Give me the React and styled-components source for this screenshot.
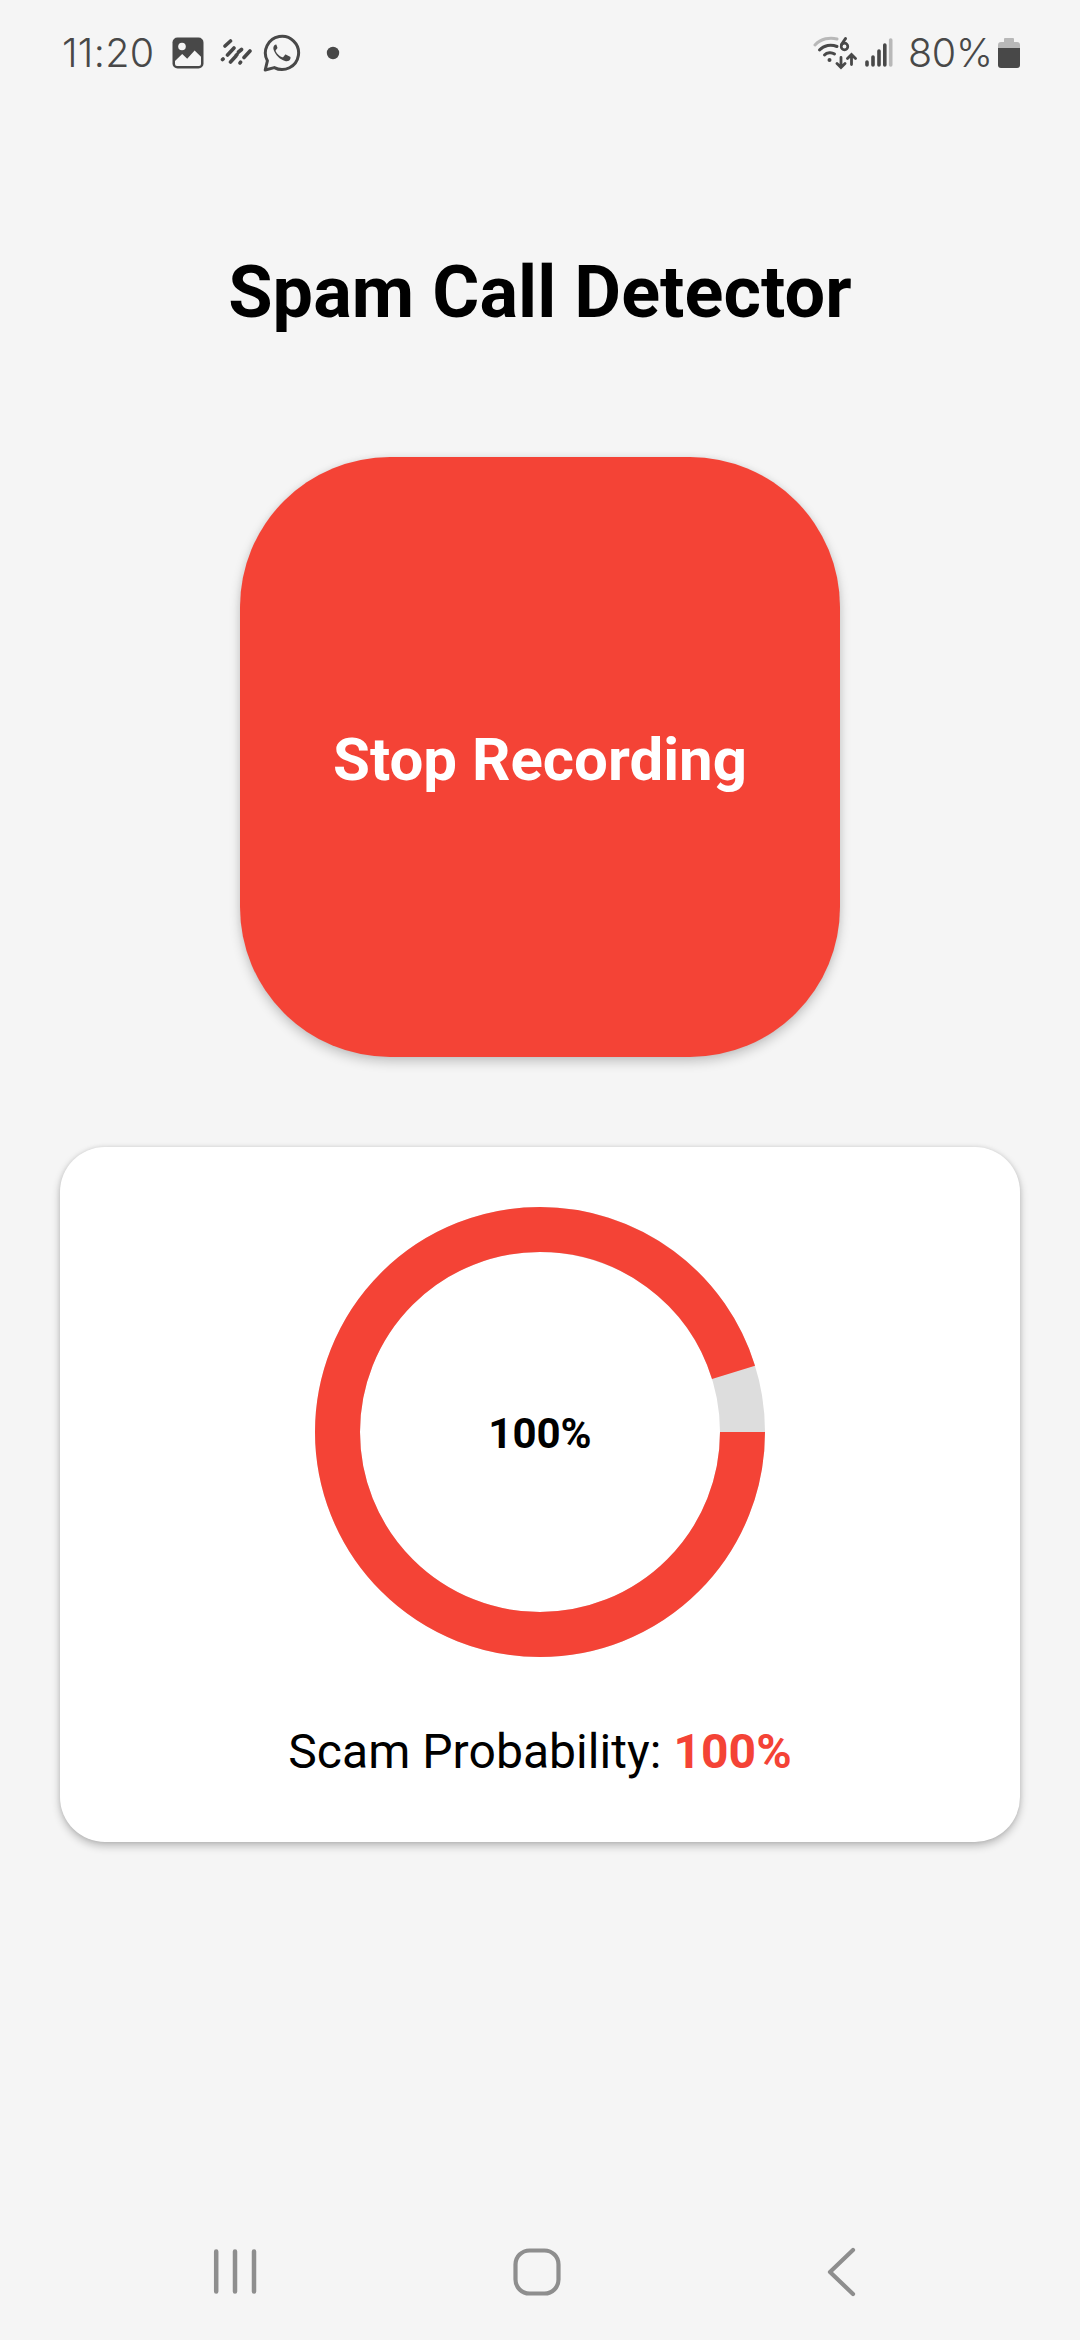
import React from 'react'
import styled, { createGlobalStyle } from 'styled-components'

const GlobalStyle = createGlobalStyle`
    body {
        margin: 0;
        background: #f5f5f5;
        font-family: Roboto, "Liberation Sans", sans-serif;
    }
`

const Screen = styled.div`
    display: flex;
    flex-direction: column;
    align-items: center;
    width: 1080px;
    height: 2340px;
    overflow: hidden;
    background: #f5f5f5;
    color: #000;
`

const StatusBar = styled.header`
    display: flex;
    align-items: center;
    justify-content: space-between;
    box-sizing: border-box;
    width: 100%;
    height: 106px;
    padding: 0 60px 0 62px;
    color: #484848;
`

const StatusGroup = styled.div`
    display: flex;
    align-items: center;
`

const StatusText = styled.span`
    width: ${({ $width }) => $width}px;
    margin-left: ${({ $gap }) => $gap || 0}px;
    font-family: Inter, Roboto, sans-serif;
    font-size: 39.5px;
    font-weight: 300;
    line-height: 46px;
    letter-spacing: ${({ $spacing }) => $spacing || 0}px;
    white-space: nowrap;
`

const StatusIcon = styled.svg`
    display: block;
    flex: none;
    margin-left: ${({ $gap }) => $gap || 0}px;
`

const Title = styled.h1`
    margin: 145px 0 0;
    font-size: 72px;
    font-weight: 700;
    line-height: 84px;
    letter-spacing: 0.08px;
    white-space: nowrap;
`

const RecordButton = styled.button`
    width: 600px;
    height: 600px;
    margin-top: 122px;
    padding: 4px 0 0;
    flex: none;
    border: none;
    border-radius: 150px;
    background: #f44336;
    box-shadow: 0 5px 12px rgba(0, 0, 0, 0.2), 0 0 6px rgba(0, 0, 0, 0.06);
    color: #fff;
    font-family: inherit;
    font-size: 60px;
    font-weight: 700;
`

const Card = styled.section`
    display: flex;
    flex-direction: column;
    align-items: center;
    box-sizing: border-box;
    flex: none;
    width: 960px;
    height: 695px;
    margin-top: 90px;
    padding-top: 60px;
    border-radius: 45px;
    background: #fff;
    box-shadow: 0 4px 8px rgba(0, 0, 0, 0.24), 0 0 4px rgba(0, 0, 0, 0.1);
`

const Gauge = styled.div`
    display: grid;
    place-items: center;
    width: 450px;
    height: 450px;

    > * {
        grid-area: 1 / 1;
    }
`

const GaugeLabel = styled.span`
    padding-top: 2px;
    font-size: 42px;
    font-weight: 700;
`

const Probability = styled.p`
    margin: 67px 0 0;
    font-size: 48px;
    line-height: 56px;
    letter-spacing: 0.05px;
    white-space: nowrap;
`

const ProbabilityValue = styled.strong`
    color: #f44336;
    font-weight: 700;
`

const NavBar = styled.nav`
    display: flex;
    align-items: center;
    justify-content: space-between;
    box-sizing: border-box;
    width: 100%;
    height: 136px;
    margin-top: auto;
    padding: 0 222px 0 210px;
`

const NavButton = styled.button`
    display: flex;
    margin-right: ${({ $gap }) => $gap || 0}px;
    padding: 0;
    border: none;
    background: none;
    color: #8e8e8e;
`

const RADIUS = 202.5
const LENGTH = 2 * Math.PI * RADIUS

const Ring = ({ filled }) => (
    <svg width="450" height="450" viewBox="0 0 450 450" fill="none" strokeWidth="45">
        <circle cx="225" cy="225" r={RADIUS} stroke="#ddd" />
        <circle cx="225" cy="225" r={RADIUS} stroke="#f44336" strokeDasharray={`${LENGTH * filled} ${LENGTH}`} />
    </svg>
)

const PictureIcon = () => (
    <StatusIcon $gap={18} width="32" height="32" viewBox="0 0 32 32">
        <rect x="0.5" y="0.5" width="31" height="31" rx="5" fill="currentColor" />
        <circle cx="10" cy="9.5" r="3.8" fill="#f5f5f5" />
        <path d="M3 24l7.2-7 5 4.8 7.4-8.3L29 19.7V27a2 2 0 0 1-2 2H5a2 2 0 0 1-2-2z" fill="#f5f5f5" />
    </StatusIcon>
)

const StripesIcon = () => (
    <StatusIcon $gap={15} width="34" height="28" viewBox="0 0 34 28" stroke="currentColor" strokeWidth="3.6" strokeLinecap="round">
        <path d="M6 7l5.500-5M3.500 20.500l.6-.6M8.500 16l6.500-7M11.500 23l5.500-6M19.500 13l3-2.500M17 16.500l1-1M21 24l.6-.8M25 18.500l6-6.500" />
    </StatusIcon>
)

const WhatsAppIcon = () => (
    <StatusIcon $gap={10} width="38" height="38" viewBox="0 0 38 38">
        <path d="M2.200 36L4.400 26.800A16.600 16.600 0 1 1 11.300 33.600z" fill="none" stroke="currentColor" strokeWidth="3" strokeLinejoin="round" />
        <path d="M13.300 10.500c-.7-.1-1.500.3-2.100 1.100-.9 1.100-1.100 2.700-.5 4.400 1.700 5 6.100 9.400 11.400 11 2.300.7 4.500-.2 5.200-2 .4-1.100.3-2-.2-2.300l-3.900-2c-.5-.2-.9-.1-1.300.4l-1.600 1.900c-.3.4-.7.4-1.200.2-2.900-1.300-5-3.300-6.400-6-.2-.4-.1-.8.200-1.100l1.300-1.600c.3-.4.300-.8.100-1.200z" fill="currentColor" />
    </StatusIcon>
)

const DotIcon = () => (
    <StatusIcon $gap={25} width="14" height="14" viewBox="0 0 14 14">
        <circle cx="7" cy="7" r="6.200" fill="currentColor" />
    </StatusIcon>
)

const WifiIcon = () => (
    <StatusIcon width="44" height="34" viewBox="0 0 44 34" fill="none" stroke="currentColor" strokeWidth="3" strokeLinecap="round">
        <path d="M2 9C8 2.500 17 1 24 3" opacity=".35" />
        <path d="M6.500 14C11 9 18 8 24 10.500M11.500 19C14 16.300 18.500 16 21.500 18" />
        <circle cx="16.500" cy="24" r="2" fill="currentColor" stroke="none" />
        <path d="M32.500 2.500L28.500 8.500" />
        <circle cx="31.500" cy="10.500" r="3.300" strokeWidth="2.700" />
        <path d="M28 21.500V31M24 27.500l4 4 4-4M38.500 28.500V19M34.500 22.500l4-4 4 4" strokeWidth="2.800" />
    </StatusIcon>
)

const SignalIcon = () => (
    <StatusIcon $gap={8} width="28" height="30" viewBox="0 0 28 30" stroke="currentColor" strokeWidth="3.600" strokeLinecap="round">
        <path d="M2 24V27M8 19V27M14 13V27M19.800 7V27" />
        <path d="M25.700 2V27" opacity=".35" />
    </StatusIcon>
)

const BatteryIcon = () => (
    <StatusIcon width="22" height="32" viewBox="0 0 22 32" fill="currentColor">
        <path d="M7 1h8q1 0 1 1v3h3q3 0 3 3v3H0V8q0-3 3-3h3V2q0-1 1-1z" opacity=".35" />
        <path d="M0 11h22v17q0 3-3 3H3q-3 0-3-3z" />
    </StatusIcon>
)

const App = () => {
    return (
        <Screen>
            <GlobalStyle />
            <StatusBar>
                <StatusGroup>
                    <StatusText $width={92} $spacing={0.3}>11:20</StatusText>
                    <PictureIcon />
                    <StripesIcon />
                    <WhatsAppIcon />
                    <DotIcon />
                </StatusGroup>
                <StatusGroup>
                    <WifiIcon />
                    <SignalIcon />
                    <StatusText $width={90} $gap={15} $spacing={-0.3}>80%</StatusText>
                    <BatteryIcon />
                </StatusGroup>
            </StatusBar>
            <Title>Spam Call Detector</Title>
            <RecordButton>Stop Recording</RecordButton>
            <Card>
                <Gauge>
                    <Ring filled={0.952} />
                    <GaugeLabel>100%</GaugeLabel>
                </Gauge>
                <Probability>
                    Scam Probability: <ProbabilityValue>100%</ProbabilityValue>
                </Probability>
            </Card>
            <NavBar>
                <NavButton aria-label="Recents">
                    <svg width="50" height="48" viewBox="0 0 50 48" stroke="currentColor" strokeWidth="4.500" strokeLinecap="round">
                        <path d="M6.200 3.500V43.500M25 3.500V43.500M44 3.500V43.500" />
                    </svg>
                </NavButton>
                <NavButton aria-label="Home" $gap={12}>
                    <svg width="48" height="48" viewBox="0 0 48 48" fill="none" stroke="currentColor" strokeWidth="4.200">
                        <rect x="2.500" y="2.500" width="43" height="43" rx="14" />
                    </svg>
                </NavButton>
                <NavButton aria-label="Back">
                    <svg width="32" height="50" viewBox="0 0 32 50" fill="none" stroke="currentColor" strokeWidth="4.200" strokeLinecap="round" strokeLinejoin="round">
                        <path d="M27 3L4 25l23 22" />
                    </svg>
                </NavButton>
            </NavBar>
        </Screen>
    )
}

export default App
